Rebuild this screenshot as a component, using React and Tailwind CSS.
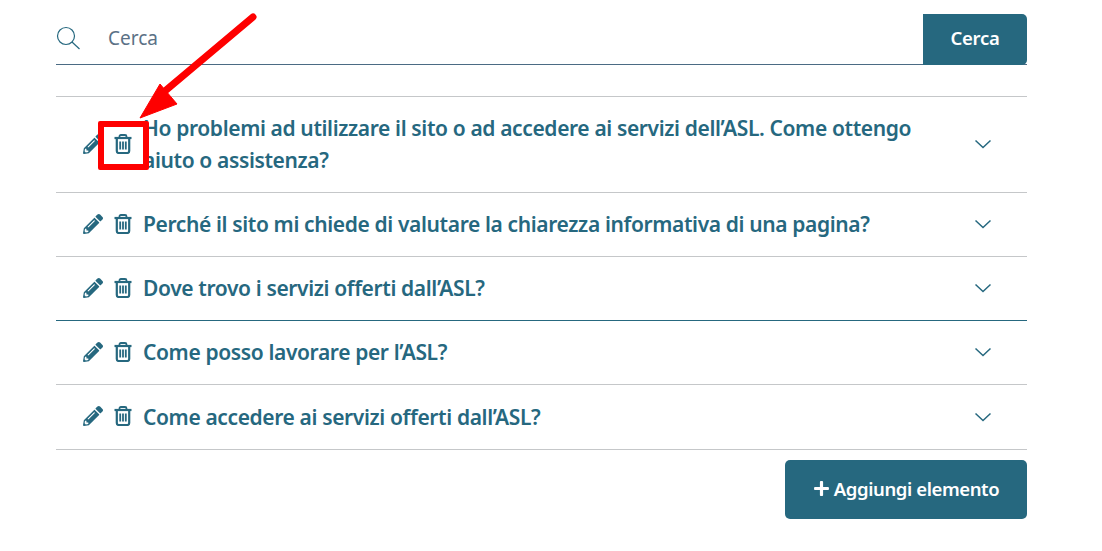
import { FaPencilAlt, FaPlus } from 'react-icons/fa';

const items = [
  { title: 'Ho problemi ad utilizzare il sito o ad accedere ai servizi dell’ASL. Come ottengo aiuto o assistenza?', height: 'h-[96px]', border: 'border-[#c5c7c9]' },
  { title: 'Perché il sito mi chiede di valutare la chiarezza informativa di una pagina?', height: 'h-[64px]', border: 'border-[#c5c7c9]' },
  { title: 'Dove trovo i servizi offerti dall’ASL?', height: 'h-[64px]', border: 'border-[#26687f]' },
  { title: 'Come posso lavorare per l’ASL?', height: 'h-[64px]', border: 'border-[#c5c7c9]' },
  { title: 'Come accedere ai servizi offerti dall’ASL?', height: 'h-[65px]', border: 'border-[#c5c7c9]' },
];

const Chevron = () => (
  <svg className="w-[18px] h-[10px] text-[#26687f]" viewBox="0 0 18 10" fill="none" stroke="currentColor" strokeWidth={1.5}>
    <path d="M1.5 1.5L9 8.5L16.5 1.5" />
  </svg>
);

const TrashIcon = () => (
  <svg className="w-[18px] h-[20px] ml-[11px] text-[#26687f] shrink-0" viewBox="0 0 18 20" fill="none" stroke="currentColor">
    <path d="M5.5 4V2.5Q5.5 1 7 1H11Q12.5 1 12.5 2.5V4" strokeWidth={1.8} />
    <path d="M0.5 4H17.5" strokeWidth={2.2} />
    <path d="M2.8 4V17Q2.8 19 4.8 19H13.2Q15.2 19 15.2 17V4" strokeWidth={2.2} />
    <path d="M6.2 7.5V15.5M9 7.5V15.5M11.8 7.5V15.5" strokeWidth={1.8} />
  </svg>
);

const AccordionRow = ({ item }) => (
  <div className={`${item.height} flex items-center border-b ${item.border} pl-[27px] pr-[35px]`}>
    <FaPencilAlt className="w-[20px] h-[20px] -mt-[2px] text-[#26687f] shrink-0" />
    <div className="-mt-[2px]">
      <TrashIcon />
    </div>
    <div className="w-[790px] ml-[11px] -mt-[1px] text-[21px] leading-[32px] font-semibold text-[#26687f] tracking-[-0.37px]">
      {item.title}
    </div>
    <div className="ml-auto -mt-[1px]">
      <Chevron />
    </div>
  </div>
);

export default function App() {
  return (
    <div className="relative w-[1102px] h-[551px] bg-white overflow-hidden font-['Noto_Sans',sans-serif]">
      <div className="w-[971px] ml-[56px] pt-[14px]">
        {/* Search */}
        <div className="flex h-[51px] border-b border-[#4b6b84]">
          <div className="flex items-center w-[867px]">
            <svg className="w-[24px] h-[24px] -mt-[2px] text-[#26687f]" viewBox="0 0 24 24" fill="none" stroke="currentColor" strokeWidth={1.2}>
              <circle cx="10" cy="10" r="8.5" />
              <path d="M16 16L23.5 23" />
            </svg>
            <span className="ml-[28px] -mt-[2px] text-[19px] text-[#5b7186]">Cerca</span>
          </div>
          <button className="w-[104px] h-[51px] pb-[3px] bg-[#26687f] rounded-tr-[5px] rounded-br-[5px] text-white text-[18.5px] font-semibold tracking-[-0.3px]">
            Cerca
          </button>
        </div>

        {/* Accordion */}
        <div className="mt-[31px] border-t border-[#c5c7c9]">
          {items.map((item) => (
            <AccordionRow key={item.title} item={item} />
          ))}
        </div>

        <div className="flex justify-end mt-[10px]">
          <button className="w-[242px] h-[59px] pb-[2px] flex items-center justify-center bg-[#26687f] rounded-[5px] text-white text-[18.5px] font-semibold tracking-[-0.4px]">
            <FaPlus className="w-[17px] h-[17px] mr-[4px]" />
            Aggiungi elemento
          </button>
        </div>
      </div>

      {/* Annotation over the screenshot */}
      <div className="absolute left-[98px] top-[121px] w-[51px] h-[49px] border-[6px] border-[#fe0000] rounded-[2px]" />
      <svg className="absolute left-[130px] top-[10px] w-[135px] h-[115px]" viewBox="0 0 135 115" fill="none">
        <path d="M123 7L35 81" stroke="#fe0000" strokeWidth={7} strokeLinecap="round" />
        <path d="M10 108L30 74L47 94Z" fill="#fe0000" stroke="#fe0000" strokeWidth={1} />
      </svg>
    </div>
  );
}
